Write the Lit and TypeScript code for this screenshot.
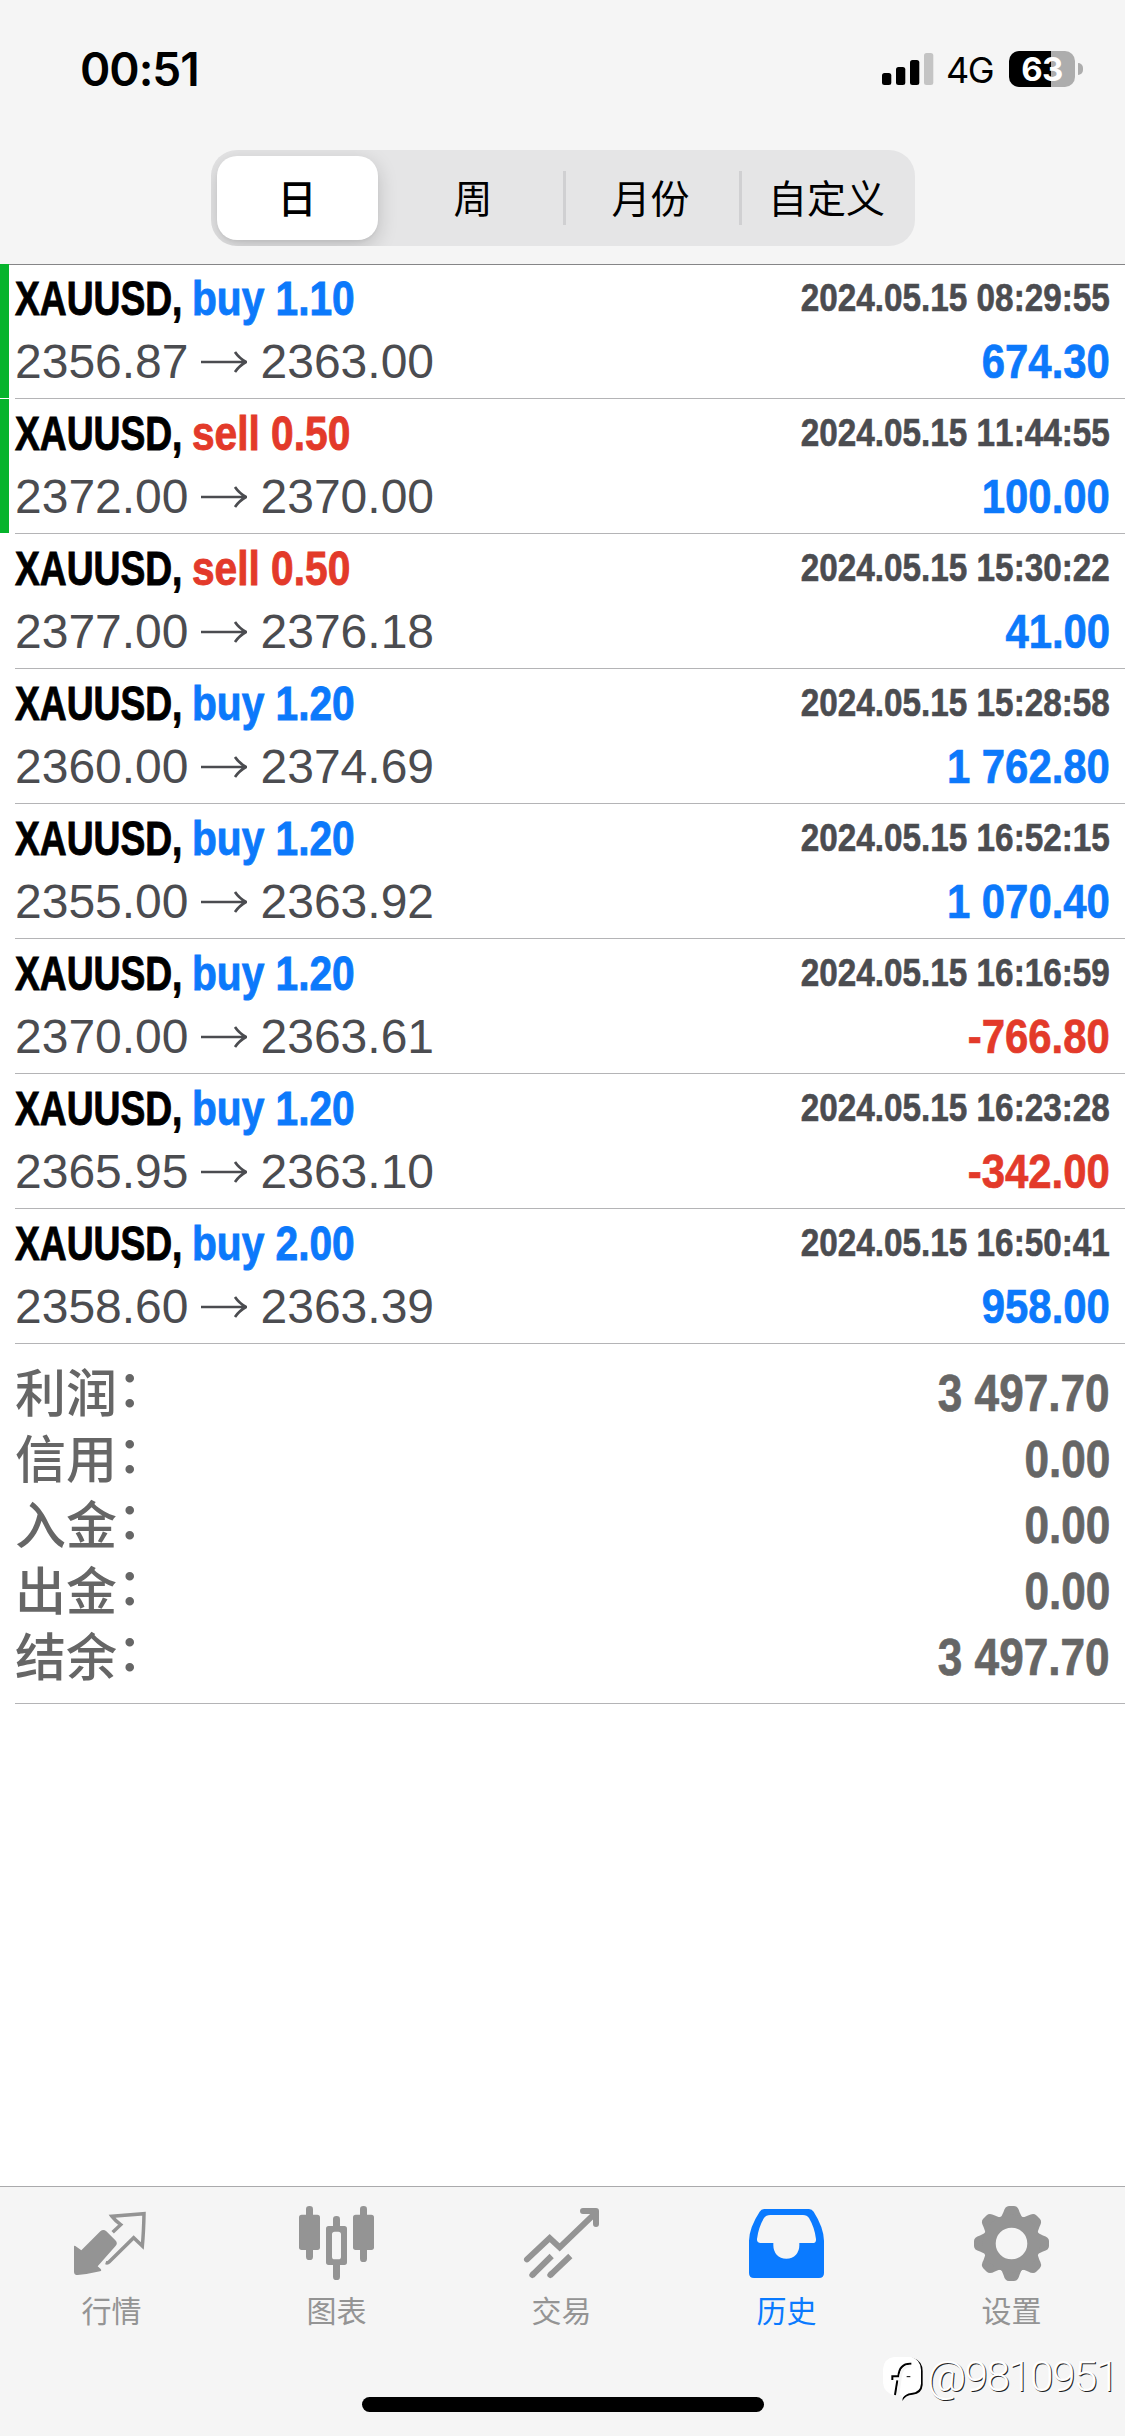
import { LitElement, html, css, svg } from "lit";
import { customElement, property } from "lit/decorators.js";
import { classMap } from "lit/directives/class-map.js";

interface Deal {
  side: "buy" | "sell";
  volume: string;
  open: string;
  close: string;
  time: string;
  profit: string;
  marked?: boolean;
}

const DEALS: Deal[] = [
  { side: "buy", volume: "1.10", open: "2356.87", close: "2363.00", time: "2024.05.15 08:29:55", profit: "674.30", marked: true },
  { side: "sell", volume: "0.50", open: "2372.00", close: "2370.00", time: "2024.05.15 11:44:55", profit: "100.00", marked: true },
  { side: "sell", volume: "0.50", open: "2377.00", close: "2376.18", time: "2024.05.15 15:30:22", profit: "41.00" },
  { side: "buy", volume: "1.20", open: "2360.00", close: "2374.69", time: "2024.05.15 15:28:58", profit: "1 762.80" },
  { side: "buy", volume: "1.20", open: "2355.00", close: "2363.92", time: "2024.05.15 16:52:15", profit: "1 070.40" },
  { side: "buy", volume: "1.20", open: "2370.00", close: "2363.61", time: "2024.05.15 16:16:59", profit: "-766.80" },
  { side: "buy", volume: "1.20", open: "2365.95", close: "2363.10", time: "2024.05.15 16:23:28", profit: "-342.00" },
  { side: "buy", volume: "2.00", open: "2358.60", close: "2363.39", time: "2024.05.15 16:50:41", profit: "958.00" },
];

const TOTALS: [string, string][] = [
  ["利润", "3 497.70"],
  ["信用", "0.00"],
  ["入金", "0.00"],
  ["出金", "0.00"],
  ["结余", "3 497.70"],
];

const quotesIcon = svg`<svg viewBox="225 108 225 225" fill="currentColor">
  <path d="M225 230Q225 225 229 228L247 241L304 184Q313 176 322 184L349 211Q358 220 349 229L296 289L305 297Q309 302 303 304Q270 312 236 315Q225 315 225 305Z"/>
  <path fill="none" stroke="currentColor" stroke-width="10.500" d="M341 187L365 164Q350 153 339 139L435 131Q434 185 430 228L404 203L330 276Q326 280 320 278"/>
</svg>`;

const chartIcon = svg`<svg viewBox="897 108 225 225" fill="currentColor">
  <rect x="918" y="108" width="21" height="162" rx="10"/><rect x="897" y="134" width="63" height="106" rx="8"/>
  <rect x="1080" y="108" width="21" height="168" rx="10"/><rect x="1059" y="134" width="63" height="106" rx="8"/>
  <rect x="999" y="138" width="21" height="44" rx="10"/><rect x="999" y="272" width="21" height="58" rx="10"/>
  <path fill-rule="evenodd" d="M986 168H1033Q1041 168 1041 176V277Q1041 285 1033 285H986Q978 285 978 277V176Q978 168 986 168ZM1004 185Q996 185 996 193V260Q996 268 1004 268H1015Q1023 268 1023 260V193Q1023 185 1015 185Z"/>
</svg>`;

const tradeIcon = svg`<svg viewBox="222 108 225 225" fill="none" stroke="currentColor" stroke-width="18" stroke-linecap="round">
  <path d="M231 268L299 204L329 232L432 133"/>
  <path d="M399 123H438V162" stroke-linejoin="round"/>
  <path stroke-linecap="butt" d="M246 316L305 258M300 316L361 258"/>
  <path d="M247 315L250 312M301 315L304 312"/>
</svg>`;

const historyIcon = svg`<svg viewBox="897 108 225 225" fill="currentColor">
  <path fill-rule="evenodd" d="M943 117H1077Q1086 117 1091 125Q1121 172 1122 212V309Q1122 324 1107 324H912Q897 324 897 309V212Q898 172 929 125Q934 117 943 117ZM961 135Q948 135 942 144Q925 173 921 207Q920 219 932 219H970V226Q970 243 980 254Q991 266 1009 266Q1027 266 1038 254Q1048 243 1048 226V219H1088Q1099 219 1098 207Q1094 173 1077 144Q1071 135 1059 135Z"/>
</svg>`;

const TOOTH = "M24 14Q28 11 29.500 6Q31 0 35 0H40Q44 0 45.500 6Q47 11 51 14Z";
const settingsIcon = svg`<svg viewBox="0 0 75 75" fill="currentColor">
  ${[0, 45, 90, 135, 180, 225, 270, 315].map((a) => svg`<path d=${TOOTH} transform="rotate(${a} 37.5 37.5)"/>`)}
  <circle cx="37.5" cy="37.5" r="22.3" fill="none" stroke="currentColor" stroke-width="13"/>
</svg>`;

const TABS = [
  { label: "行情", icon: quotesIcon },
  { label: "图表", icon: chartIcon },
  { label: "交易", icon: tradeIcon },
  { label: "历史", icon: historyIcon, active: true },
  { label: "设置", icon: settingsIcon },
];

@customElement("status-bar")
class StatusBar extends LitElement {
  static styles = css`
    :host {
      display: flex;
      justify-content: space-between;
      align-items: flex-start;
      height: 150px;
      box-sizing: border-box;
      padding: 51px 42px 0 80px;
      font-family: Inter, "Liberation Sans", sans-serif;
      color: #000;
    }
    .time {
      font-size: 46px;
      font-weight: 600;
      line-height: 36px;
      letter-spacing: -1px;
    }
    .right { display: flex; height: 36px; align-items: center; }
    .signal { width: 52px; height: 32px; margin-right: 12px; }
    .net {
      width: 63px;
      font-size: 36px;
      line-height: 36px;
      letter-spacing: -1.6px;
      padding-top: 1px;
    }
    .battery {
      width: 66px;
      height: 36px;
      border-radius: 10px;
      background: linear-gradient(90deg, #000 42px, #adadad 42px);
      color: #fff;
      font-size: 33px;
      font-weight: 700;
      line-height: 36px;
      letter-spacing: -0.5px;
      text-align: center;
    }
    .cap {
      width: 5px;
      height: 12px;
      margin-left: 3px;
      border-radius: 0 5px 5px 0;
      background: #adadad;
    }
  `;
  render() {
    return html`
      <div class="time">00:51</div>
      <div class="right">
        <svg class="signal" viewBox="0 0 52 32">
          <rect x="0" y="20" width="9.300" height="12" rx="2.500" />
          <rect x="14" y="14" width="9.300" height="18" rx="2.500" />
          <rect x="28" y="7" width="9.300" height="25" rx="2.500" />
          <rect x="42" y="0" width="9.300" height="32" rx="2.500" fill="#c4c4c4" />
        </svg>
        <div class="net">4G</div>
        <div class="battery">63</div>
        <div class="cap"></div>
      </div>
    `;
  }
}

@customElement("period-switch")
class PeriodSwitch extends LitElement {
  static styles = css`
    :host { display: block; width: 704px; margin: 0 auto; }
    .track {
      display: grid;
      grid-template-columns: repeat(4, 1fr);
      align-items: center;
      height: 96px;
      border-radius: 26px;
      background: #e5e5e6;
      overflow: hidden;
    }
    .item {
      font: 39px/50px "Noto Sans CJK SC", sans-serif;
      text-align: center;
      color: #000;
      box-sizing: border-box;
      height: 54px;
      padding-right: 3px;
    }
    .divided { border-left: 3px solid #d0d0d2; }
    .on {
      font-weight: 500;
      height: 84px;
      line-height: 80px;
      margin: 0 9px 0 6px;
      padding-right: 0;
      border-radius: 20px;
      background: #fff;
      box-shadow: 0 6px 20px rgba(0, 0, 0, 0.18), 0 2px 3px rgba(0, 0, 0, 0.04);
    }
  `;
  render() {
    return html`
      <div class="track">
        <div class="item on">日</div>
        <div class="item">周</div>
        <div class="item divided">月份</div>
        <div class="item divided">自定义</div>
      </div>
    `;
  }
}

@customElement("deal-row")
class DealRow extends LitElement {
  @property({ attribute: false }) deal!: Deal;
  static styles = css`
    :host {
      display: flex;
      height: 135px;
      font-family: "Liberation Sans", Arial, sans-serif;
      color: #4b4c50;
    }
    .mark { width: 9px; margin-right: 6px; height: 134px; }
    .marked { background: #06b42c; }
    .body {
      flex: 1;
      height: 134px;
      border-bottom: 1px solid #b4b4b6;
      padding-right: 15px;
    }
    .line { display: flex; justify-content: space-between; line-height: 54px; }
    .top { padding-top: 8px; height: 56px; }
    .bottom { padding-top: 7px; }
    .title { display: flex; font-size: 48px; font-weight: 700; -webkit-text-stroke: 0.9px currentColor; }
    .symbol {
      width: 177px;
      color: #000;
      white-space: nowrap;
      transform: scaleX(0.775);
      transform-origin: left;
    }
    .op { white-space: pre; transform-origin: left; transform: scaleX(0.847); }
    .blue { color: #0c79fb; }
    .red { color: #e33a2a; }
    .time {
      font-size: 38px;
      font-weight: 700;
      -webkit-text-stroke: 0.6px currentColor;
      font-kerning: none;
      transform: scaleX(0.876);
      transform-origin: right;
      position: relative;
      top: -1px;
    }
    .prices { display: flex; align-items: center; font-size: 48px; }
    .arrow { width: 46px; height: 22px; margin: 0 14px 0 12px; }
    .profit {
      font-size: 48px;
      font-weight: 700;
      -webkit-text-stroke: 0.7px currentColor;
      transform: scaleX(0.872);
      transform-origin: right;
    }
  `;
  render() {
    const d = this.deal;
    const loss = d.profit.startsWith("-");
    return html`
      <div class=${classMap({ mark: true, marked: !!d.marked })}></div>
      <div class="body">
        <div class="line top">
          <div class="title">
            <span class="symbol">XAUUSD,</span>
            <span class=${classMap({ op: true, blue: d.side === "buy", red: d.side === "sell" })}>${d.side} ${d.volume}</span>
          </div>
          <span class="time">${d.time}</span>
        </div>
        <div class="line bottom">
          <div class="prices">
            <span>${d.open}</span>
            <svg class="arrow" viewBox="0 0 46 22" fill="none" stroke="currentColor" stroke-width="2.700">
              <path d="M0 11H44M34 1Q38 7 45 11Q38 15 34 21" />
            </svg>
            <span>${d.close}</span>
          </div>
          <span class=${classMap({ profit: true, blue: !loss, red: loss })}>${d.profit}</span>
        </div>
      </div>
    `;
  }
}

@customElement("totals-block")
class TotalsBlock extends LitElement {
  static styles = css`
    :host {
      display: block;
      margin-left: 15px;
      padding: 17px 15px 12px 0;
      border-bottom: 1px solid #b4b4b6;
      color: #666;
    }
    .row { display: flex; justify-content: space-between; height: 66px; line-height: 66px; }
    .label {
      font-family: "Noto Sans CJK SC", sans-serif;
      font-size: 51px;
      font-weight: 500;
      line-height: 58px;
    }
    .colon { position: relative; top: -5px; }
    .sum {
      font-family: "Liberation Sans", Arial, sans-serif;
      font-size: 51px;
      font-weight: 700;
      -webkit-text-stroke: 0.7px currentColor;
      transform: scaleX(0.865);
      transform-origin: right;
    }
  `;
  render() {
    return TOTALS.map(
      ([label, sum]) => html`<div class="row">
        <span class="label">${label}<span class="colon">：</span></span>
        <span class="sum">${sum}</span>
      </div>`
    );
  }
}

@customElement("tab-bar")
class TabBar extends LitElement {
  static styles = css`
    :host {
      display: block;
      height: 250px;
      box-sizing: border-box;
      border-top: 1px solid #aaaaac;
      background: #f5f5f5;
      position: relative;
      font-family: "Noto Sans CJK SC", sans-serif;
    }
    .tabs { display: grid; grid-template-columns: repeat(5, 1fr); height: 210px; }
    .tab {
      display: flex;
      flex-direction: column;
      align-items: center;
      padding: 19px 2px 0 0;
      color: #949494;
      font-size: 30px;
      line-height: 44px;
    }
    .tab svg { width: 75px; height: 75px; display: block; margin-bottom: 6px; overflow: visible; }
    .active { color: #0a7aff; }
    .home { width: 402px; height: 15px; margin: 0 auto; border-radius: 8px; background: #000; }
    .stamp {
      position: absolute;
      left: 883px;
      top: 169px;
      display: flex;
      align-items: center;
      gap: 4px;
      color: #fff;
      font: 300 43px/46px Roboto, sans-serif;
      letter-spacing: -2px;
      text-shadow: 1px 1px 0 #222;
    }
    .stamp svg { width: 40px; height: 46px; display: block; }
    .stamp span { position: relative; top: -3px; }
  `;
  render() {
    return html`
      <div class="tabs">
        ${TABS.map(
          (t) => html`<div class=${classMap({ tab: true, active: !!t.active })}>${t.icon}<span>${t.label}</span></div>`
        )}
      </div>
      <div class="home"></div>
      <div class="stamp">
        <svg viewBox="39 45 120 138" fill="none">
          <path fill="#000" d="M128 50Q158 60 158 90V132Q156 158 128 161Q106 162 97 180Q98 160 112 156L140 140Z" />
          <path fill="#fff" d="M72 48H122Q151 54 153 86V128Q151 154 124 156Q106 158 97 172L93 162H75Q42 158 39 125V84Q42 52 72 48Z" />
          <path stroke="#000" stroke-width="6" d="M124 68Q88 66 85 106H67V117M82 118L75 162" />
          <path stroke="#f5f5f5" stroke-width="8" d="M122 75Q95 74 91 112L84 162" />
          <path stroke="#000" stroke-width="3" d="M110 107H121" />
        </svg>
        <span>@9810951</span>
      </div>
    `;
  }
}

@customElement("app-root")
class AppRoot extends LitElement {
  static styles = css`
    :host {
      display: flex;
      flex-direction: column;
      width: 1125px;
      height: 2436px;
      background: #fff;
      overflow: hidden;
    }
    .head {
      height: 265px;
      box-sizing: border-box;
      background: #f5f5f5;
      border-bottom: 1px solid #858587;
      flex: none;
    }
    .list { flex: 1; margin-top: -1px; }
  `;
  render() {
    return html`
      <div class="head">
        <status-bar></status-bar>
        <period-switch></period-switch>
      </div>
      <div class="list">
        ${DEALS.map((d) => html`<deal-row .deal=${d}></deal-row>`)}
        <totals-block></totals-block>
      </div>
      <tab-bar></tab-bar>
    `;
  }
}
